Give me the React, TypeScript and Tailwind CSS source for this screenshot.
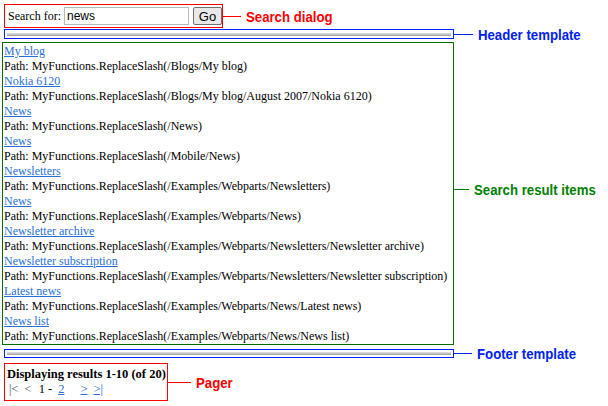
import React from "react";

const results = [
  { title: "My blog", path: "/Blogs/My blog" },
  { title: "Nokia 6120", path: "/Blogs/My blog/August 2007/Nokia 6120" },
  { title: "News", path: "/News" },
  { title: "News", path: "/Mobile/News" },
  { title: "Newsletters", path: "/Examples/Webparts/Newsletters" },
  { title: "News", path: "/Examples/Webparts/News" },
  { title: "Newsletter archive", path: "/Examples/Webparts/Newsletters/Newsletter archive" },
  { title: "Newsletter subscription", path: "/Examples/Webparts/Newsletters/Newsletter subscription" },
  { title: "Latest news", path: "/Examples/Webparts/News/Latest news" },
  { title: "News list", path: "/Examples/Webparts/News/News list" },
];

function Label({ color, line, text, className = "" }: { color: string; line: string; text: string; className?: string }) {
  return (
    <div className={`flex items-center ${className}`}>
      <div className={`h-px shrink-0 ${line}`} style={{ backgroundColor: color }} />
      <span
        className="ml-[5px] origin-left scale-x-[0.88] whitespace-nowrap text-[15px] font-bold leading-none font-[family-name:'Liberation_Sans',Arial,sans-serif]"
        style={{ color }}
      >
        {text}
      </span>
    </div>
  );
}

function Separator() {
  return (
    <div className="flex h-full w-[450px] shrink-0 items-center border border-[#0022ff] px-[2px]">
      <div className="h-[3px] w-full border-t border-b border-t-[#d8d8d8] border-b-[#a8a8a8] bg-[#c4c4c4]" />
    </div>
  );
}

export default function App() {
  return (
    <div className="h-[406px] w-[608px] overflow-hidden bg-white text-[12px] leading-[15px] text-black font-[family-name:'Liberation_Serif','Times_New_Roman',serif]">
      {/* search dialog */}
      <div className="mt-[4px] flex h-[24px] items-center pl-[4px]">
        <div className="flex h-[24px] w-[219px] shrink-0 items-center border border-[#ff0000] pl-[3px]">
          <span className="whitespace-nowrap text-[12px]">Search for:</span>
          <input
            readOnly
            value="news"
            className="ml-[3px] h-[18px] w-[125px] border border-[#b4b9bf] px-[2px] text-[12px] outline-none font-[family-name:'Liberation_Sans',Arial,sans-serif]"
          />
          <button className="ml-[4px] h-[18px] w-[30px] rounded-[2px] border border-[#707070] bg-[#e8e8e8] text-[13px] leading-none font-[family-name:'Liberation_Sans',Arial,sans-serif]">
            Go
          </button>
        </div>
        <Label color="#ff0000" line="w-[18px]" text="Search dialog" />
      </div>

      {/* header template */}
      <div className="mt-[1px] flex h-[10px] items-center pl-[4px]">
        <Separator />
        <Label color="#0022ee" line="w-[19px]" text="Header template" />
      </div>

      {/* search results */}
      <div className="mt-[3px] flex h-[303px] items-center pl-[2px]">
        <div className="h-[303px] w-[452px] shrink-0 border border-[#007000] pl-[1px] pt-[1px]">
          {results.map((r, i) => (
            <div key={i}>
              <a href="#" className="block text-[#2a6fd6] underline">
                {r.title}
              </a>
              <div className="whitespace-nowrap">Path: MyFunctions.ReplaceSlash({r.path})</div>
            </div>
          ))}
        </div>
        <Label color="#008000" line="w-[15px]" text="Search result items" className="mb-[8px]" />
      </div>

      {/* footer template */}
      <div className="mt-[4px] flex h-[9px] items-center pl-[4px]">
        <Separator />
        <Label color="#0022ee" line="w-[18px]" text="Footer template" />
      </div>

      {/* pager */}
      <div className="mt-[5px] flex h-[38px] items-center pl-[4px]">
        <div className="h-[38px] w-[164px] shrink-0 border border-[#ff0000] pl-[2px] pt-[3px]">
          <div className="whitespace-nowrap text-[12.5px] font-bold leading-[14px]">Displaying results 1-10 (of 20)</div>
          <div className="flex items-center pl-[2px] text-[12.5px] leading-[16px]">
            <span className="text-[#555555]">|&lt;</span>
            <span className="ml-[6px] text-[#555555]">&lt;</span>
            <span className="ml-[7px]">1 -</span>
            <a href="#" className="ml-[6px] text-[#2a6fd6] underline">2</a>
            <a href="#" className="ml-[16px] text-[#2a6fd6] underline">&gt;</a>
            <a href="#" className="ml-[6px] text-[#2a6fd6] underline">&gt;|</a>
          </div>
        </div>
        <Label color="#ff0000" line="w-[23px]" text="Pager" />
      </div>
    </div>
  );
}
